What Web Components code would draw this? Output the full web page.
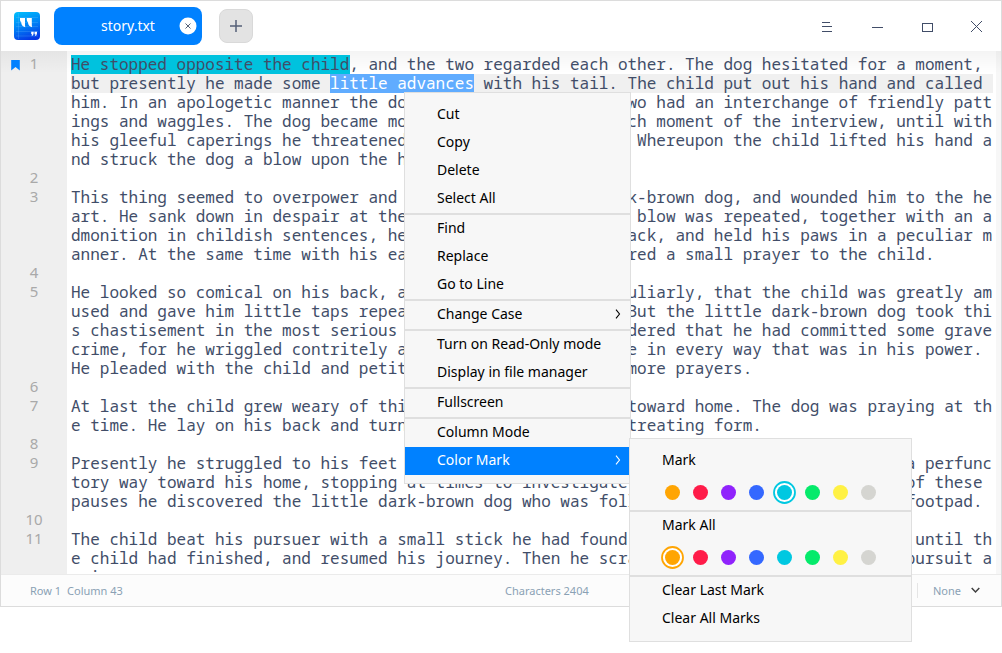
<!DOCTYPE html>
<html lang="en">
<head>
<meta charset="utf-8">
<title>story.txt</title>
<style>
html,body{margin:0;height:100%;overflow:hidden;background:#fff}
body{font-family:"Noto Sans","Open Sans",sans-serif;font-size:14px;color:#414d68}
</style>
</head>
<body>
<text-editor></text-editor>
<script>
const define = (name, html, setup) => customElements.define(name, class extends HTMLElement {
  constructor() {
    super();
    this.attachShadow({mode: "open"});
  }
  connectedCallback() {
    const t = document.createElement("template");
    t.innerHTML = html;
    this.shadowRoot.replaceChildren(t.content.cloneNode(true));
    if (setup) setup(this, this.shadowRoot);
  }
});

define("app-logo", `
<style>:host{display:block;width:26px;height:28px}svg{display:block}</style>
<svg width="26" height="28" viewBox="0 0 26 28">
  <defs><linearGradient id="g" x1=".3" y1="0" x2=".6" y2="1"><stop offset="0" stop-color="#00b8fb"/><stop offset=".5" stop-color="#0080f5"/><stop offset="1" stop-color="#0536e4"/></linearGradient></defs>
  <rect width="26" height="28" rx="4" fill="url(#g)"/>
  <path d="M2 5.500h22M2 10.500h22M2 14.500h22M2 19.500h22M2 24h22M4.500 1v26" stroke="#8cd2ff" stroke-opacity=".28" stroke-width=".7"/>
  <path fill="#fff" d="M6 6h5v5.200q0 3 .3 4-4.100-1.200-4.100-5Q6 9.500 6 8zM12.800 6h5v5.200q0 3 .3 4-4.100-1.200-4.100-5-1.200-.7-1.200-2.200z"/>
  <path fill="#fff" d="M17.200 19.700h2.500v1.500q0 2.300-2.300 3 .7-.9.7-2h-.9zM20.500 19.700H23v1.500q0 2.300-2.300 3 .7-.9.7-2h-.9z"/>
</svg>`);

define("file-tab", `
<style>
:host{display:grid;grid-template-columns:1fr;align-items:center;width:148px;height:38px;border-radius:8px;background:#0081ff;color:#fff;font-size:14px;line-height:20px}
span,svg{grid-area:1/1}
span{text-align:center}
svg{justify-self:end;margin-right:5px}
</style>
<span><slot></slot></span>
<svg width="18" height="18"><circle cx="9" cy="9" r="8.500" fill="#fff"/><path d="M6.500 6.500l5 5m0-5l-5 5" stroke="#536076" fill="none"/></svg>`);

define("title-bar", `
<style>
:host{display:flex;align-items:center;height:50px;padding-left:13px;background:#fff}
file-tab{margin-left:14px}
.add{margin-left:17px;width:32px;height:32px;border:1px solid #d9d9d9;border-radius:8px;background:#e3e3e3}
.add svg{display:block}
.win{margin-left:auto;display:flex}
</style>
<app-logo></app-logo><file-tab>story.txt</file-tab>
<div class="add"><svg width="32" height="32"><path d="M10 16h12M16 10v12" stroke="#556078" stroke-width="1.500"/></svg></div>
<div class="win">
  <svg width="50" height="50"><path d="M21 21.500h8M21 25.500h10M21 30.500h10" stroke="#414d68"/></svg>
  <svg width="50" height="50"><path d="M21 26.500h11" stroke="#414d68"/></svg>
  <svg width="50" height="50"><rect x="21.500" y="22.500" width="10" height="8" fill="none" stroke="#414d68"/></svg>
  <svg width="50" height="50"><path d="M20 20l11 11m0-11l-11 11" stroke="#414d68"/></svg>
</div>`);

define("text-line", `
<style>
:host{display:grid;grid-template-columns:66px 1fr 5px;height:19px;line-height:19px}
.gutter{display:grid;grid-template-columns:1fr;color:#a9a9a9;font-size:15px}
.gutter>*{grid-area:1/1}
.num{text-align:center;line-height:17px}
svg{margin:5px 0 0 10px}
.code{white-space:pre;margin-left:4px;width:922px;font:16px/19px "Noto Sans Mono","DejaVu Sans Mono",monospace}
:host([current]) .code{background:#f0f0f0}
.code ::slotted(*){display:inline-block;height:19px}
</style>
<div class="gutter"><div class="num"></div></div><div class="code"><slot></slot></div>`,
(el, root) => {
  root.querySelector(".num").textContent = el.getAttribute("n") || "";
  if (el.hasAttribute("bookmark"))
    root.querySelector(".gutter").insertAdjacentHTML("beforeend",
      '<svg width="9" height="11"><path d="M.2 0h8.600v10.500L4.500 7 .2 10.500z" fill="#0081ff"/></svg>');
});

const LINES = [
[1, '<mark>He stopped opposite the child</mark>, and the two regarded each other. The dog hesitated for a moment,'],
["", 'but presently he made some <b>little advances</b> with his tail. The child put out his hand and called'],
["", 'him. In an apologetic manner the dog came close, and the two had an interchange of friendly patt'],
["", 'ings and waggles. The dog became more enthusiastic with each moment of the interview, until with'],
["", 'his gleeful caperings he threatened to overturn the child. Whereupon the child lifted his hand a'],
["", 'nd struck the dog a blow upon the head.'],
[2, ''],
[3, 'This thing seemed to overpower and astonish the little dark-brown dog, and wounded him to the he'],
["", "art. He sank down in despair at the child's feet. When the blow was repeated, together with an a"],
["", 'dmonition in childish sentences, he turned over upon his back, and held his paws in a peculiar m'],
["", 'anner. At the same time with his ears and his eyes he offered a small prayer to the child.'],
[4, ''],
[5, 'He looked so comical on his back, and holding his paws peculiarly, that the child was greatly am'],
["", 'used and gave him little taps repeatedly, to keep him so. But the little dark-brown dog took thi'],
["", 's chastisement in the most serious way, and no doubt considered that he had committed some grave'],
["", 'crime, for he wriggled contritely and showed his repentance in every way that was in his power.'],
["", 'He pleaded with the child and petitioned him, and offered more prayers.'],
[6, ''],
[7, 'At last the child grew weary of this amusement and turned toward home. The dog was praying at th'],
["", 'e time. He lay on his back and turned his eyes upon the retreating form.'],
[8, ''],
[9, 'Presently he struggled to his feet and started after the child. The latter wandered in a perfunc'],
["", 'tory way toward his home, stopping at times to investigate various matters. During one of these'],
["", 'pauses he discovered the little dark-brown dog who was following him with the air of a footpad.'],
[10, ''],
[11, 'The child beat his pursuer with a small stick he had found. The dog lay down and prayed until th'],
["", 'e child had finished, and resumed his journey. Then he scrambled erect and took up the pursuit a'],
["", 'gain.']
];

define("text-area", `
<style>
:host{display:block;box-sizing:border-box;height:523px;padding-top:4px;overflow:hidden;
 background:linear-gradient(rgba(0,0,0,.045),rgba(0,0,0,0) 22px),linear-gradient(90deg,#efefef 66px,#fff 66px,#fff 995px,#f7f7f7 995px)}
mark{background:#00c2de;color:inherit;box-shadow:1px 0 #00c2de}
b{background:#60acff;color:#fff;font-weight:400}
text-line{letter-spacing:-.005px}
</style>` + LINES.map(([n, t], i) =>
  `<text-line n="${n}"${i === 0 ? " bookmark" : ""}${i === 1 ? " current" : ""}>${t}</text-line>`).join(""));

define("status-bar", `
<style>
:host{display:grid;grid-template-columns:475px 1fr auto;align-items:center;height:31px;border-top:1px solid #ebebeb;background:#fcfcfc;color:#8aa1b4;font-size:11px;line-height:15px;padding:0 21px 0 29px}
.pos{display:flex;gap:6px}
.enc{display:flex;align-items:center;border-left:1px solid #e5e5e5;padding-left:15px}
svg{margin-left:10px}
</style>
<div class="pos"><span>Row 1</span><span>Column 43</span></div><div>Characters 2404</div>
<div class="enc">None<svg width="9" height="7"><path d="M.7 1l3.800 4L8.300 1" fill="none" stroke="#404040" stroke-width="1.500"/></svg></div>`);

define("menu-panel", `
<style>:host{display:block;box-sizing:border-box;padding:8px 0;border:1px solid #dfdfdf;background:#f7f7f7}</style>
<slot></slot>`);
define("menu-divider", `<style>:host{display:block;height:2px;background:#dfdfdf}</style>`);
define("menu-item", `
<style>
:host{display:flex;align-items:center;box-sizing:border-box;height:28px;padding:0 9px 2px 32px;color:#000;font-size:14px;line-height:20px}
:host([active]){background:#0081ff;color:#fff;padding-right:8px}
svg{display:none;margin-left:auto}
:host([sub]) svg{display:block}
</style>
<slot></slot><svg width="6" height="10"><path d="M1 .7l3.500 4.300L1 9.300" fill="none" stroke="currentColor" stroke-width="1.100"/></svg>`);

define("color-row", `
<style>
:host{display:flex;align-items:center;height:35px;padding-left:28px}
svg{display:block}
</style>`, (el, root) => {
  const pick = +el.getAttribute("selected");
  const colors = ["#ffa503","#ff1c49","#9023fc","#3468ff","#00c8e1","#05ea6b","#fff144","#d5d5d1"];
  root.innerHTML += colors.map((c, i) =>
    `<svg width="28" height="35"><circle cx="14.500" cy="17.500" r="7.500" fill="${c}"/>${
      i === pick ? `<circle cx="14.500" cy="17.500" r="10.500" fill="#fff" stroke="${c}" stroke-width="1.800"/><circle cx="14.500" cy="17.500" r="7.500" fill="${c}"/>` : ""}</svg>`).join("");
});

define("text-editor", `
<style>
:host{display:block;position:relative;width:1002px;height:653px;overflow:hidden}
.window{box-sizing:border-box;width:1002px;height:607px;border:1px solid #dcdcdc;overflow:hidden}
.context{position:absolute;left:404px;top:92px;width:227px}
.context menu-item[active]{margin-right:1px}
.marks{position:absolute;left:629px;top:438px;width:283px}
</style>
<div class="window"><title-bar></title-bar><text-area></text-area><status-bar></status-bar></div>
<menu-panel class="context">
  <menu-item>Cut</menu-item><menu-item>Copy</menu-item><menu-item>Delete</menu-item><menu-item>Select All</menu-item>
  <menu-divider></menu-divider>
  <menu-item>Find</menu-item><menu-item>Replace</menu-item><menu-item>Go to Line</menu-item>
  <menu-divider></menu-divider>
  <menu-item sub>Change Case</menu-item>
  <menu-divider></menu-divider>
  <menu-item>Turn on Read-Only mode</menu-item><menu-item>Display in file manager</menu-item>
  <menu-divider></menu-divider>
  <menu-item>Fullscreen</menu-item>
  <menu-divider></menu-divider>
  <menu-item>Column Mode</menu-item><menu-item sub active>Color Mark</menu-item>
</menu-panel>
<menu-panel class="marks">
  <menu-item>Mark</menu-item><color-row selected="4"></color-row>
  <menu-divider></menu-divider>
  <menu-item>Mark All</menu-item><color-row selected="0"></color-row>
  <menu-divider></menu-divider>
  <menu-item>Clear Last Mark</menu-item><menu-item>Clear All Marks</menu-item>
</menu-panel>`);
</script>
</body>
</html>
